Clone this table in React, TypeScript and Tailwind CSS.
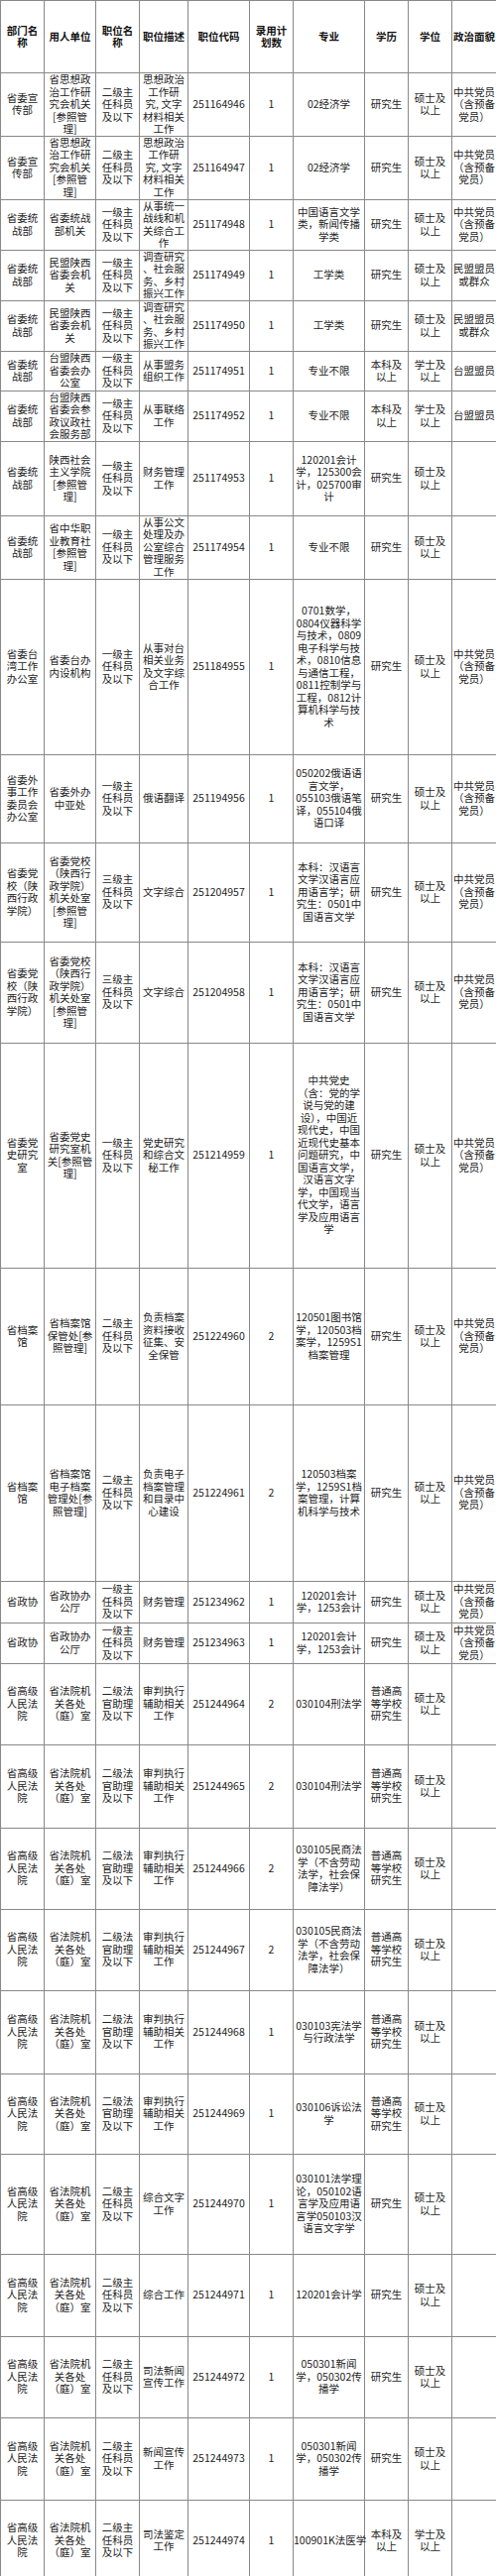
import React from 'react';

type Row = { h: number; cells: string[] };

const widths = [44, 52, 44, 49, 62, 44, 72, 44, 44, 45];

const header = ['部门名\n称', '用人单位', '职位名\n称', '职位描述', '职位代码', '录用计\n划数', '专业', '学历', '学位', '政治面貌'];

const party = '中共党员\n（含预备\n党员）';
const master = '硕士及\n以上';
const court = '省高级\n人民法\n院';
const courtUnit = '省法院机\n关各处\n（庭）室';
const judge = '二级法\n官助理\n及以下';
const judgeDesc = '审判执行\n辅助相关\n工作';
const regular = '普通高\n等学校\n研究生';
const lvl1 = '一级主\n任科员\n及以下';
const lvl2 = '二级主\n任科员\n及以下';
const lvl3 = '三级主\n任科员\n及以下';
const tongzhan = '省委统\n战部';
const dangxiao = '省委党\n校（陕\n西行政\n学院）';
const dangxiaoUnit = '省委党校\n（陕西行\n政学院）\n机关处室\n[参照管\n理]';
const chinese = '本科：汉语言\n文学汉语言应\n用语言学；研\n究生：0501中\n国语言文学';

const rows: Row[] = [
  { h: 62, cells: ['省委宣\n传部', '省思想政\n治工作研\n究会机关\n[参照管\n理]', lvl2, '思想政治\n工作研\n究, 文字\n材料相关\n工作', '251164946', '1', '02经济学', '研究生', master, party] },
  { h: 64, cells: ['省委宣\n传部', '省思想政\n治工作研\n究会机关\n[参照管\n理]', lvl2, '思想政治\n工作研\n究, 文字\n材料相关\n工作', '251164947', '1', '02经济学', '研究生', master, party] },
  { h: 51, cells: [tongzhan, '省委统战\n部机关', lvl1, '从事统一\n战线和机\n关综合工\n作', '251174948', '1', '中国语言文学\n类，新闻传播\n学类', '研究生', master, party] },
  { h: 50, cells: [tongzhan, '民盟陕西\n省委会机\n关', lvl1, '调查研究\n、社会服\n务、乡村\n振兴工作', '251174949', '1', '工学类', '研究生', master, '民盟盟员\n或群众'] },
  { h: 50, cells: [tongzhan, '民盟陕西\n省委会机\n关', lvl1, '调查研究\n、社会服\n务、乡村\n振兴工作', '251174950', '1', '工学类', '研究生', master, '民盟盟员\n或群众'] },
  { h: 40, cells: [tongzhan, '台盟陕西\n省委会办\n公室', lvl1, '从事盟务\n组织工作', '251174951', '1', '专业不限', '本科及\n以上', '学士及\n以上', '台盟盟员'] },
  { h: 49, cells: [tongzhan, '台盟陕西\n省委会参\n政议政社\n会服务部', lvl1, '从事联络\n工作', '251174952', '1', '专业不限', '本科及\n以上', '学士及\n以上', '台盟盟员'] },
  { h: 75, cells: [tongzhan, '陕西社会\n主义学院\n[参照管\n理]', lvl1, '财务管理\n工作', '251174953', '1', '120201会计\n学，125300会\n计，025700审\n计', '研究生', master, ''] },
  { h: 64, cells: [tongzhan, '省中华职\n业教育社\n[参照管\n理]', lvl1, '从事公文\n处理及办\n公室综合\n管理服务\n工作', '251174954', '1', '专业不限', '研究生', master, ''] },
  { h: 177, cells: ['省委台\n湾工作\n办公室', '省委台办\n内设机构', lvl1, '从事对台\n相关业务\n及文字综\n合工作', '251184955', '1', '0701数学，\n0804仪器科学\n与技术，0809\n电子科学与技\n术，0810信息\n与通信工程，\n0811控制学与\n工程，0812计\n算机科学与技\n术', '研究生', master, party] },
  { h: 89, cells: ['省委外\n事工作\n委员会\n办公室', '省委外办\n中亚处', lvl1, '俄语翻译', '251194956', '1', '050202俄语语\n言文学，\n055103俄语笔\n译，055104俄\n语口译', '研究生', master, party] },
  { h: 100, cells: [dangxiao, dangxiaoUnit, lvl3, '文字综合', '251204957', '1', chinese, '研究生', master, party] },
  { h: 102, cells: [dangxiao, dangxiaoUnit, lvl3, '文字综合', '251204958', '1', chinese, '研究生', master, party] },
  { h: 227, cells: ['省委党\n史研究\n室', '省委党史\n研究室机\n关[参照管\n理]', lvl1, '党史研究\n和综合文\n秘工作', '251214959', '1', '中共党史\n（含：党的学\n说与党的建\n设），中国近\n现代史，中国\n近现代史基本\n问题研究，中\n国语言文学，\n汉语言文字\n学，中国现当\n代文学，语言\n学及应用语言\n学', '研究生', master, party] },
  { h: 138, cells: ['省档案\n馆', '省档案馆\n保管处[参\n照管理]', lvl2, '负责档案\n资料接收\n征集、安\n全保管', '251224960', '2', '120501图书馆\n学，120503档\n案学，1259S1\n档案管理', '研究生', master, party] },
  { h: 178, cells: ['省档案\n馆', '省档案馆\n电子档案\n管理处[参\n照管理]', lvl2, '负责电子\n档案管理\n和目录中\n心建设', '251224961', '2', '120503档案\n学，1259S1档\n案管理，计算\n机科学与技术', '研究生', master, party] },
  { h: 42, cells: ['省政协', '省政协办\n公厅', lvl1, '财务管理', '251234962', '1', '120201会计\n学，1253会计', '研究生', master, party] },
  { h: 41, cells: ['省政协', '省政协办\n公厅', lvl1, '财务管理', '251234963', '1', '120201会计\n学，1253会计', '研究生', master, party] },
  { h: 82, cells: [court, courtUnit, judge, judgeDesc, '251244964', '2', '030104刑法学', regular, master, ''] },
  { h: 84, cells: [court, courtUnit, judge, judgeDesc, '251244965', '2', '030104刑法学', regular, master, ''] },
  { h: 82, cells: [court, courtUnit, judge, judgeDesc, '251244966', '2', '030105民商法\n学（不含劳动\n法学，社会保\n障法学）', regular, master, ''] },
  { h: 82, cells: [court, courtUnit, judge, judgeDesc, '251244967', '2', '030105民商法\n学（不含劳动\n法学，社会保\n障法学）', regular, master, ''] },
  { h: 84, cells: [court, courtUnit, judge, judgeDesc, '251244968', '1', '030103宪法学\n与行政法学', regular, master, ''] },
  { h: 81, cells: [court, courtUnit, judge, judgeDesc, '251244969', '1', '030106诉讼法\n学', regular, master, ''] },
  { h: 101, cells: [court, courtUnit, lvl2, '综合文字\n工作', '251244970', '1', '030101法学理\n论，050102语\n言学及应用语\n言学050103汉\n语言文字学', '研究生', master, ''] },
  { h: 83, cells: [court, courtUnit, lvl2, '综合工作', '251244971', '1', '120201会计学', '研究生', master, ''] },
  { h: 82, cells: [court, courtUnit, lvl2, '司法新闻\n宣传工作', '251244972', '1', '050301新闻\n学，050302传\n播学', '研究生', master, ''] },
  { h: 83, cells: [court, courtUnit, lvl2, '新闻宣传\n工作', '251244973', '1', '050301新闻\n学，050302传\n播学', '研究生', master, ''] },
  { h: 82, cells: [court, courtUnit, lvl2, '司法鉴定\n工作', '251244974', '1', '100901K法医学', '本科及\n以上', '学士及\n以上', ''] },
];

function Cell({ text, bold }: { text: string; bold?: boolean }) {
  return (
    <td className={`border border-[#888] p-0 text-center align-middle ${bold ? 'font-bold text-[#111]' : ''}`}>
      {text.split('\n').map((line, i) => (
        <div key={i} className="whitespace-nowrap">
          {line}
        </div>
      ))}
    </td>
  );
}

export default function App() {
  return (
    <div className="w-[500px] bg-white text-[#222] text-[10.5px] leading-[12.5px] font-['Noto_Sans_CJK_SC','Noto_Sans',sans-serif]">
      <table className="w-[500px] table-fixed border-collapse">
        <colgroup>
          {widths.map((w, i) => (
            <col key={i} style={{ width: w }} />
          ))}
        </colgroup>
        <thead>
          <tr className="h-[73px]">
            {header.map((t, i) => (
              <Cell key={i} text={t} bold />
            ))}
          </tr>
        </thead>
        <tbody>
          {rows.map((r, i) => (
            <tr key={i} style={{ height: r.h }}>
              {r.cells.map((c, j) => (
                <Cell key={j} text={c} />
              ))}
            </tr>
          ))}
        </tbody>
      </table>
    </div>
  );
}
